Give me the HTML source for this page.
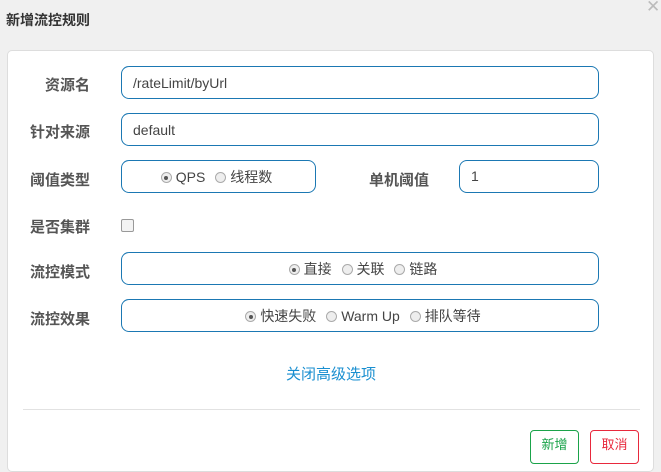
<!DOCTYPE html><html><head><meta charset="utf-8"><style>
body{margin:0;width:661px;height:456px;background:#f0f0f0;font-family:"Liberation Sans","Noto Sans CJK SC",sans-serif;position:relative;overflow:hidden;color:#555}
.t{position:absolute;left:6px;top:10px;font-size:14px;font-weight:bold;color:#333}
.x{position:absolute;left:646px;top:-3px;font-size:17px;color:#bbb}
.p{position:absolute;left:7px;top:50px;width:645px;height:420px;background:#fff;border:1px solid #ddd;border-radius:5px}
.l{position:absolute;font-size:15px;font-weight:bold;color:#555;text-align:right;width:90px;left:0}
.i{position:absolute;border:1px solid #1b78b3;border-radius:8px;box-sizing:border-box;height:33px;font-size:14px;color:#444;line-height:33px;padding-left:11px}
.c{text-align:center;padding:0}
.r{display:inline-block;width:11px;height:11px;border:1px solid #aaa;border-radius:50%;background:#eee;vertical-align:-1px;margin:0 4px 0 6px;box-sizing:border-box;position:relative}
.r.on::after{content:"";position:absolute;left:2.5px;top:2.5px;width:4px;height:4px;border-radius:50%;background:#555}
.b{position:absolute;top:430px;width:49px;height:34px;box-sizing:border-box;border:1px solid;border-radius:4px;font-size:13px;text-align:center;line-height:28px;background:#fff}
</style></head><body>
<div class="t">新增流控规则</div><div class="x">✕</div>
<div class="p"></div>
<div class="l" style="top:74px">资源名</div>
<div class="i" style="left:121px;top:66px;width:478px">/rateLimit/byUrl</div>
<div class="l" style="top:121px">针对来源</div>
<div class="i" style="left:121px;top:113px;width:478px">default</div>
<div class="l" style="top:169px">阈值类型</div>
<div class="i c" style="left:121px;top:160px;width:195px;padding-right:10px"><span class="r on"></span>QPS <span class="r"></span>线程数</div>
<div class="l" style="top:169px;left:339px">单机阈值</div>
<div class="i" style="left:459px;top:160px;width:140px;line-height:31px">1</div>
<div class="l" style="top:216px">是否集群</div>
<div style="position:absolute;left:121px;top:219px;width:11px;height:11px;border:1px solid #999;border-radius:2px;background:#f3f3f3"></div>
<div class="l" style="top:261px">流控模式</div>
<div class="i c" style="left:121px;top:252px;width:478px"><span class="r on"></span>直接 <span class="r"></span>关联 <span class="r"></span>链路</div>
<div class="l" style="top:308px">流控效果</div>
<div class="i c" style="left:121px;top:299px;width:478px"><span class="r on"></span>快速失败 <span class="r"></span>Warm Up <span class="r"></span>排队等待</div>
<div style="position:absolute;left:286px;top:363px;font-size:15px;color:#1a8fd0">关闭高级选项</div>
<div style="position:absolute;left:23px;top:409px;width:617px;height:1px;background:#e2e2e2"></div>
<div class="b" style="left:530px;border-color:#1aa34a;color:#1aa34a">新增</div>
<div class="b" style="left:590px;border-color:#e8293d;color:#e8293d">取消</div>
</body></html>
